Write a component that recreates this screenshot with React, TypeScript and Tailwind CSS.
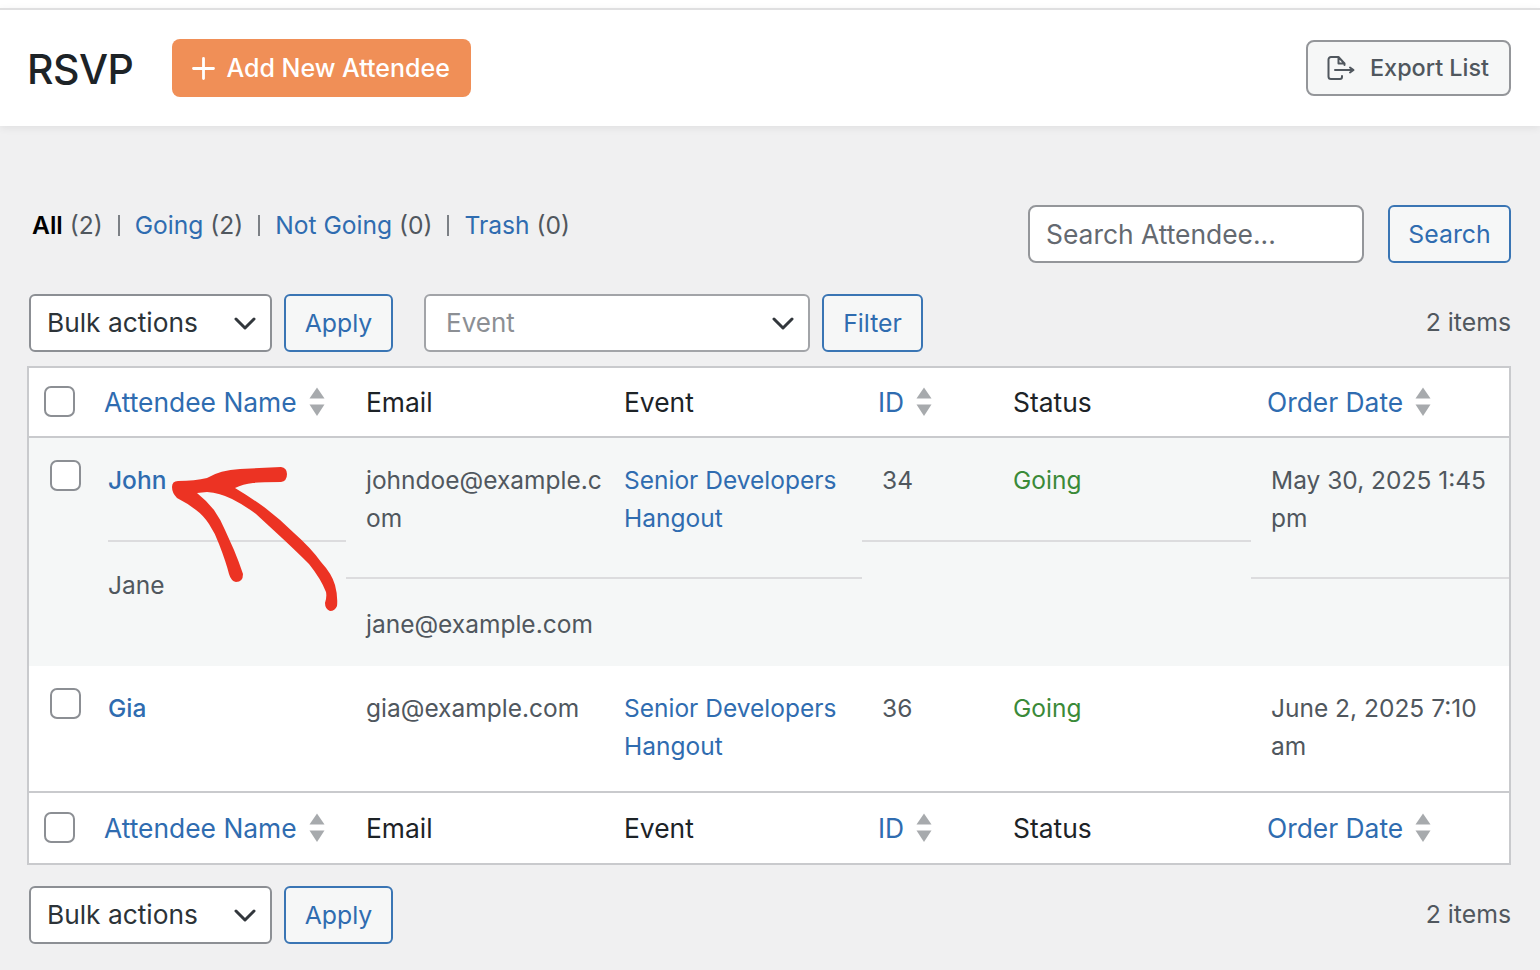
import React from "react";

function Sort() {
  return (
    <svg width="16" height="30" viewBox="0 0 16 30" className="inline-block shrink-0" aria-hidden="true">
      <path d="M8 0.5 L15.5 11.5 H0.5 Z" fill="#a7aaad" />
      <path d="M0.5 17.5 H15.5 L8 29 Z" fill="#a7aaad" />
    </svg>
  );
}

function Check({ className }: { className: string }) {
  return <span className={"block w-[31px] h-[31px] rounded-[7px] border-2 border-[#8c8f94] bg-white " + className} />;
}

function Chevron({ className }: { className: string }) {
  return (
    <svg width="22" height="13" viewBox="0 0 22 13" fill="none" className={className} aria-hidden="true">
      <path d="M2 2 L11 11 L20 2" stroke="#32373c" strokeWidth="3" strokeLinecap="round" strokeLinejoin="round" />
    </svg>
  );
}

function OutlineBtn({ label, className }: { label: string; className: string }) {
  return (
    <button className={"h-[58px] rounded-[6px] border-2 border-[#3a75b4] bg-[#f6f7f7] text-[24.8px] text-[#2f6cb0] " + className}>
      {label}
    </button>
  );
}

function BulkBar() {
  return (
    <>
      <div className="w-[243px] h-[58px] rounded-[6px] border-2 border-[#8c8f94] bg-white flex items-center justify-between pl-[16px] pr-[14px] text-[26.3px] text-[#2c3338]">
        <span>Bulk actions</span>
        <Chevron className="" />
      </div>
      <OutlineBtn label="Apply" className="w-[109px] ml-3" />
    </>
  );
}

function HeadRow({ top }: { top: boolean }) {
  const border = top ? "h-[70px] border-b-2" : "h-[72px] border-t-2";
  const cell = "p-0 align-middle font-normal text-left text-[26.4px] border-[#c9cacd] " + border;
  return (
    <tr>
      <th className={cell}>
        <Check className="ml-[15px] -mt-0.5" />
      </th>
      <th className={cell + " pl-3"}>
        <span className="flex items-center gap-3 text-[#2f6cb0]">
          Attendee Name <Sort />
        </span>
      </th>
      <th className={cell + " pl-5 text-[#1d2327]"}>Email</th>
      <th className={cell + " pl-4 text-[#1d2327]"}>Event</th>
      <th className={cell + " pl-4"}>
        <span className="flex items-center gap-3 text-[#2f6cb0]">
          ID <Sort />
        </span>
      </th>
      <th className={cell + " pl-4 text-[#1d2327]"}>Status</th>
      <th className={cell + " pl-4"}>
        <span className="flex items-center gap-3 text-[#2f6cb0]">
          Order Date <Sort />
        </span>
      </th>
    </tr>
  );
}

function Sep() {
  return <span className="mx-[15px] h-[21px] w-[2px] bg-[#7c8085] self-center" />;
}

export default function App() {
  const td = "p-0 align-top";
  return (
    <div className="relative w-[1540px] h-[970px] overflow-hidden bg-[#f0f0f1] font-['Inter',sans-serif] text-[24.5px] leading-[38px] text-[#50575e]">
      <div className="bg-white pt-2">
        <header className="h-[118px] border-t-2 border-[#dfdfe0] bg-white shadow-[0_2px_8px_rgba(0,0,0,0.07)] flex items-center pl-[27px] pr-[29px]">
          <h1 className="text-[41px] font-medium text-[#1d2327] tracking-[-0.5px] mt-px">RSVP</h1>
          <button className="ml-[39px] w-[299px] h-[58px] rounded-[8px] bg-[#f08f57] text-white text-[25px] font-medium flex items-center pl-[20px] gap-[11px]">
            <svg width="23" height="23" viewBox="0 0 23 23" aria-hidden="true">
              <path d="M11.5 1.5 V21.5 M1.5 11.5 H21.5" stroke="#fff" strokeWidth="2.8" strokeLinecap="round" />
            </svg>
            Add New Attendee
          </button>
          <button className="ml-auto w-[205px] h-[56px] rounded-[8px] border-2 border-[#94969a] bg-[#f6f7f7] text-[#50575e] text-[23.4px] font-medium flex items-center pl-[19px] gap-[15px]">
            <svg width="28" height="24" viewBox="0 0 28 24" fill="none" aria-hidden="true">
              <path
                d="M15 20 V21 A2 2 0 0 1 13 23 H4 A2.5 2.5 0 0 1 1.5 20.5 V3.5 A2.5 2.5 0 0 1 4 1 H11.5 L17.5 7.5 V9 M11.5 1.5 V7.5 H17.5 M8 14 H25 M23 11.5 L26.5 14 L23 16.5"
                stroke="#50575e"
                strokeWidth="2"
                strokeLinejoin="round"
                strokeLinecap="round"
              />
            </svg>
            Export List
          </button>
        </header>
      </div>

      <main className="pl-[27px] pr-[31px] pt-[79px]">
        <div className="flex items-start justify-between">
          <nav className="flex pl-[5px] pt-px whitespace-pre text-[24.6px]">
            <b className="font-semibold text-black">All</b>
            <span> (2)</span>
            <Sep />
            <a className="text-[#2f6cb0]">Going</a>
            <span> (2)</span>
            <Sep />
            <a className="text-[#2f6cb0]">Not Going</a>
            <span> (0)</span>
            <Sep />
            <a className="text-[#2f6cb0]">Trash</a>
            <span> (0)</span>
          </nav>
          <div className="flex gap-6 -mr-[2px]">
            <div className="w-[336px] h-[58px] rounded-[8px] border-2 border-[#94969a] bg-white flex items-center pl-[16px] text-[26.4px] text-[#646970]">
              Search Attendee...
            </div>
            <OutlineBtn label="Search" className="w-[123px]" />
          </div>
        </div>

        <div className="mt-[31px] flex items-center pl-[2px] -mr-[2px]">
          <BulkBar />
          <div className="ml-[31px] w-[386px] h-[58px] rounded-[6px] border-2 border-[#a2a4a8] bg-white flex items-center justify-between pl-[20px] pr-[14px] text-[26px] text-[#8c8f94]">
            <span>Event</span>
            <Chevron className="" />
          </div>
          <OutlineBtn label="Filter" className="w-[101px] ml-3" />
          <span className="ml-auto -mt-[2px] text-[24.8px]">2 items</span>
        </div>

        <table className="mt-[14px] w-[1482px] table-fixed border-separate border-spacing-0 border-2 border-[#c9cacd] bg-white">
          <colgroup>
            <col className="w-[63px]" />
            <col className="w-[254px]" />
            <col className="w-[262px]" />
            <col className="w-[254px]" />
            <col className="w-[135px]" />
            <col className="w-[254px]" />
            <col className="w-[258px]" />
          </colgroup>
          <thead>
            <HeadRow top />
          </thead>
          <tbody>
            <tr className="bg-[#f5f7f7]">
              <td className={td + " h-[228px]"}>
                <Check className="ml-[21px] mt-[22px]" />
              </td>
              <td className={td}>
                <div className="ml-4 h-[104px] pt-[23px] border-b-2 border-[#dcdcde]">
                  <a className="font-medium text-[#2f6cb0]">John</a>
                </div>
                <div className="pl-4 pt-[24px]">Jane</div>
              </td>
              <td className={td}>
                <div className="h-[141px] pl-5 pr-1 pt-[23px] break-all border-b-2 border-[#dcdcde]">johndoe@example.com</div>
                <div className="pl-5 pt-[26px]">jane@example.com</div>
              </td>
              <td className={td}>
                <div className="h-[141px] pl-4 pr-3 pt-[23px] border-b-2 border-[#dcdcde] text-[#2f6cb0]">
                  Senior Developers Hangout
                </div>
              </td>
              <td className={td}>
                <div className="h-[104px] pl-5 pt-[23px] border-b-2 border-[#dcdcde]">34</div>
              </td>
              <td className={td}>
                <div className="h-[104px] pl-4 pt-[23px] border-b-2 border-[#dcdcde] text-[#3a8a38]">Going</div>
              </td>
              <td className={td}>
                <div className="h-[141px] pl-5 pr-3 pt-[23px] border-b-2 border-[#dcdcde]">May 30, 2025 1:45 pm</div>
              </td>
            </tr>
            <tr>
              <td className={td + " h-[125px]"}>
                <Check className="ml-[21px] mt-[22px]" />
              </td>
              <td className={td + " pl-4 pt-[23px]"}>
                <a className="font-medium text-[#2f6cb0]">Gia</a>
              </td>
              <td className={td + " pl-5 pt-[23px]"}>gia@example.com</td>
              <td className={td + " pl-4 pr-3 pt-[23px] text-[#2f6cb0]"}>Senior Developers Hangout</td>
              <td className={td + " pl-5 pt-[23px]"}>36</td>
              <td className={td + " pl-4 pt-[23px] text-[#3a8a38]"}>Going</td>
              <td className={td + " pl-5 pr-3 pt-[23px]"}>June 2, 2025 7:10 am</td>
            </tr>
          </tbody>
          <tfoot>
            <HeadRow top={false} />
          </tfoot>
        </table>

        <div className="mt-[21px] flex items-center pl-[2px] -mr-[2px]">
          <BulkBar />
          <span className="ml-auto -mt-[2px] text-[24.8px]">2 items</span>
        </div>
      </main>

      <svg className="absolute left-0 top-0 pointer-events-none" width="1540" height="970" viewBox="0 0 1540 970" aria-hidden="true">
        <path
          fill="#ec3323"
          d="M172 487 Q172 481 178 481 Q195 481 207 478 Q220 470 240 469 L281 467 Q287 468 287 474 Q287 481 281 482 Q260 482 253 483 Q243 484 235 488 Q250 497 264 507 Q280 519 294 533 Q311 548 321 562 Q332 574 335 585 Q338 596 337 606 Q335 611 330 611 Q325 609 325 603 Q327 597 326 592 Q321 579 309 564 Q297 552 282 538 Q269 526 256 514 Q244 505 232 499 Q220 493 207 492 L197 493 Q207 501 214 510 Q221 520 225 530 L234 550 Q239 562 243 574 Q243 582 236 582 Q231 581 229 574 Q226 562 219 544 Q215 533 209 524 Q203 515 196 510 Q187 503 177 498 Q172 493 172 487 Z"
        />
      </svg>
    </div>
  );
}
